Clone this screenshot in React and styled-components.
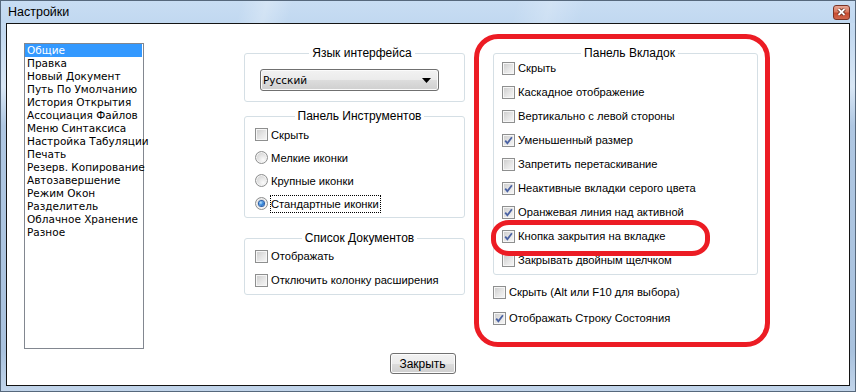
import React from "react";
import styled, { createGlobalStyle } from "styled-components";

const GlobalStyle = createGlobalStyle`
  html, body {
    margin: 0;
    padding: 0;
    background: #ffffff;
  }
  body {
    font-family: "Liberation Sans", Arial, sans-serif;
    color: #000;
  }
`;

const Window = styled.div`
  width: 856px;
  height: 392px;
  box-sizing: border-box;
  border: 1px solid #56687c;
  background: linear-gradient(
    to bottom,
    #cde1f5 0%,
    #c3d9f0 8%,
    #d9e7f5 22%,
    #afc7e2 32%,
    #a9c2de 90%,
    #c2d5ea 100%
  );
  display: flex;
  flex-direction: column;
  padding: 0 5px 5px 5px;
`;

const TitleBar = styled.div`
  height: 22px;
  flex: none;
  display: flex;
  align-items: center;
  justify-content: space-between;
  background: linear-gradient(
      105deg,
      transparent 28%,
      rgba(255, 255, 255, 0.25) 31%,
      transparent 34%,
      transparent 60%,
      rgba(255, 255, 255, 0.2) 64%,
      transparent 68%
    ),
    linear-gradient(to bottom, #c8ddf3, #c1d8f0);
  margin: 0 -5px;
  padding: 0 5px 0 7px;
`;

const TitleText = styled.span`
  font-size: 12.5px;
  color: #000;
`;

const CloseButton = styled.div`
  width: 17px;
  height: 15px;
  box-sizing: border-box;
  border: 1px solid #7a3427;
  border-radius: 3px;
  background: linear-gradient(to bottom, #e7a796 0%, #d8785f 45%, #c64a2f 55%, #d0674c 100%);
  display: flex;
  align-items: center;
  justify-content: center;
`;

const Client = styled.div`
  flex: 1;
  position: relative;
  box-sizing: border-box;
  background: #ffffff;
  border: 1px solid #141414;
  display: flex;
  flex-direction: column;
  padding: 19px 0 0 17px;
`;

const MainRow = styled.div`
  display: flex;
  align-items: flex-start;
`;

const ListBox = styled.div`
  width: 120px;
  height: 306px;
  box-sizing: border-box;
  border: 1px solid #828790;
  font-family: "DejaVu Sans", Verdana, sans-serif;
  font-size: 10.5px;
  line-height: 13px;
  flex: none;
`;

const ListItem = styled.div`
  height: 13px;
  padding-left: 2px;
  margin-right: 1px;
  white-space: nowrap;
  background: ${(p) => (p.$selected ? "#3399ff" : "transparent")};
  color: ${(p) => (p.$selected ? "#ffffff" : "#000000")};
`;

const Column = styled.div`
  width: ${(p) => p.$width}px;
  margin-left: ${(p) => p.$offset}px;
  margin-top: 10px;
  display: flex;
  flex-direction: column;
  flex: none;
`;

const Group = styled.div`
  border: 1px solid #d5dfe5;
  border-radius: 3px;
  box-sizing: border-box;
  padding: ${(p) => p.$pad};
  margin-top: ${(p) => p.$gap || 0}px;
`;

const GroupTitle = styled.div`
  display: table;
  margin: -8px auto -4px;
  padding: 0 3px;
  background: #ffffff;
  font-size: 12px;
  line-height: 14px;
`;

const Row = styled.div`
  height: ${(p) => p.$h}px;
  display: flex;
  align-items: center;
  gap: 3px;
  font-size: 11.2px;
  white-space: nowrap;
`;

const Box = styled.span`
  width: 13px;
  height: 13px;
  box-sizing: border-box;
  border: 1px solid #8e8f8f;
  background: linear-gradient(135deg, #cbcbcb 0%, #e6e6e6 55%, #f7f7f7 100%);
  box-shadow: inset 0 0 0 1px #f6f6f6;
  flex: none;
  display: flex;
  align-items: center;
  justify-content: center;
`;

const RadioDot = styled.span`
  width: 13px;
  height: 13px;
  box-sizing: border-box;
  border-radius: 50%;
  border: 1px solid #8e8f8f;
  background: radial-gradient(circle at 65% 70%, #fbfbfb 0%, #dcdcdc 60%, #c9c9c9 100%);
  box-shadow: inset 0 0 0 1px #f4f4f4;
  flex: none;
  display: flex;
  align-items: center;
  justify-content: center;

  &::after {
    content: "";
    display: ${(p) => (p.$on ? "block" : "none")};
    width: 5px;
    height: 5px;
    border-radius: 50%;
    background: radial-gradient(circle at 35% 35%, #bfe6ff 0%, #3c8ee0 45%, #0f4da6 100%);
    box-shadow: 0 0 0 1px #2b5fa8;
  }
`;

const FocusLabel = styled.span`
  outline: 1px dotted #000;
  outline-offset: 0;
  padding: 2px 1px 2px 0;
`;

const Combo = styled.div`
  width: 179px;
  height: 22px;
  box-sizing: border-box;
  border: 1px solid #707070;
  border-radius: 3px;
  background: linear-gradient(to bottom, #f2f2f2 0%, #ebebeb 50%, #dddddd 51%, #cfcfcf 100%);
  box-shadow: inset 0 0 0 1px #fbfbfb;
  display: flex;
  align-items: center;
  justify-content: space-between;
  padding: 0 7px 0 2px;
  font-family: "DejaVu Sans", Verdana, sans-serif;
  font-size: 10.5px;
`;

const Spacer = styled.div`
  height: ${(p) => p.$h}px;
  flex: none;
`;

const Footer = styled.div`
  display: flex;
  justify-content: center;
  margin-top: 4px;
  padding-right: 28px;
`;

const PushButton = styled.div`
  width: 66px;
  height: 21px;
  box-sizing: border-box;
  border: 1px solid #707070;
  border-radius: 3px;
  background: linear-gradient(to bottom, #f2f2f2 0%, #ebebeb 50%, #dddddd 51%, #cfcfcf 100%);
  box-shadow: inset 0 0 0 1px #fcfcfc;
  display: flex;
  align-items: center;
  justify-content: center;
  font-size: 12px;
`;

const Mark = styled.div`
  position: absolute;
  left: ${(p) => p.$x}px;
  top: ${(p) => p.$y}px;
  width: ${(p) => p.$w}px;
  height: ${(p) => p.$h}px;
  box-sizing: border-box;
  border: 5px solid #ec1c24;
  border-radius: ${(p) => p.$r};
  pointer-events: none;
`;

const Check = () => (
  <svg width="9" height="9" viewBox="0 0 9 9">
    <path d="M1.2 4.6 L3.4 7.2 L7.9 1.3" fill="none" stroke="#4a62a3" strokeWidth="1.8" />
  </svg>
);

const CheckItem = ({ label, checked, h = 24 }) => (
  <Row $h={h}>
    <Box>{checked && <Check />}</Box>
    <span>{label}</span>
  </Row>
);

const RadioItem = ({ label, on, focused, h = 23 }) => (
  <Row $h={h}>
    <RadioDot $on={on} />
    {focused ? <FocusLabel>{label}</FocusLabel> : <span>{label}</span>}
  </Row>
);

const sections = [
  "Общие",
  "Правка",
  "Новый Документ",
  "Путь По Умолчанию",
  "История Открытия",
  "Ассоциация Файлов",
  "Меню Синтаксиса",
  "Настройка Табуляции",
  "Печать",
  "Резерв. Копирование",
  "Автозавершение",
  "Режим Окон",
  "Разделитель",
  "Облачное Хранение",
  "Разное",
];

const tabOptions = [
  ["Скрыть", false],
  ["Каскадное отображение", false],
  ["Вертикально с левой стороны", false],
  ["Уменьшенный размер", true],
  ["Запретить перетаскивание", false],
  ["Неактивные вкладки серого цвета", true],
  ["Оранжевая линия над активной", true],
  ["Кнопка закрытия на вкладке", true],
  ["Закрывать двойным щелчком", false],
];

export default function App() {
  return (
    <>
      <GlobalStyle />
      <Window>
        <TitleBar>
          <TitleText>Настройки</TitleText>
          <CloseButton>
            <svg width="9" height="8" viewBox="0 0 9 8">
              <path d="M1.5 1 L7.5 7 M7.5 1 L1.5 7" stroke="#5a2418" strokeWidth="3.4" />
              <path d="M1.5 1 L7.5 7 M7.5 1 L1.5 7" stroke="#ffffff" strokeWidth="1.8" />
            </svg>
          </CloseButton>
        </TitleBar>
        <Client>
          <MainRow>
            <ListBox>
              {sections.map((s, i) => (
                <ListItem key={s} $selected={i === 0}>
                  {s}
                </ListItem>
              ))}
            </ListBox>

            <Column $width={221} $offset={100}>
              <Group $pad="0 0 10px 15px">
                <GroupTitle>Язык интерфейса</GroupTitle>
                <Spacer $h={13} />
                <Combo>
                  <span>Русский</span>
                  <svg width="9" height="5" viewBox="0 0 9 5">
                    <path d="M0 0 H9 L4.5 5 Z" fill="#000" />
                  </svg>
                </Combo>
              </Group>

              <Group $pad="0 0 2px 10px" $gap={14}>
                <GroupTitle>Панель Инструментов</GroupTitle>
                <Spacer $h={4} />
                <CheckItem label="Скрыть" h={23} />
                <RadioItem label="Мелкие иконки" />
                <RadioItem label="Крупные иконки" />
                <RadioItem label="Стандартные иконки" on focused />
              </Group>

              <Group $pad="0 0 2px 10px" $gap={20}>
                <GroupTitle>Список Документов</GroupTitle>
                <Spacer $h={3} />
                <CheckItem label="Отображать" />
                <CheckItem label="Отключить колонку расширения" />
              </Group>
            </Column>

            <Column $width={265} $offset={28}>
              <Group $pad="0 0 2px 8px">
                <GroupTitle>Панель Вкладок</GroupTitle>
                {tabOptions.map(([label, checked]) => (
                  <CheckItem key={label} label={label} checked={checked} />
                ))}
              </Group>
              <Spacer $h={4} />
              <CheckItem label="Скрыть (Alt или F10 для выбора)" h={26} />
              <CheckItem label="Отображать Строку Состояния" checked h={26} />
            </Column>
          </MainRow>

          <Footer>
            <PushButton>Закрыть</PushButton>
          </Footer>

          <Mark $x={467} $y={10} $w={296} $h={313} $r="24px" />
          <Mark $x={484} $y={196} $w={219} $h={36} $r="18px / 16px" />
        </Client>
      </Window>
    </>
  );
}
